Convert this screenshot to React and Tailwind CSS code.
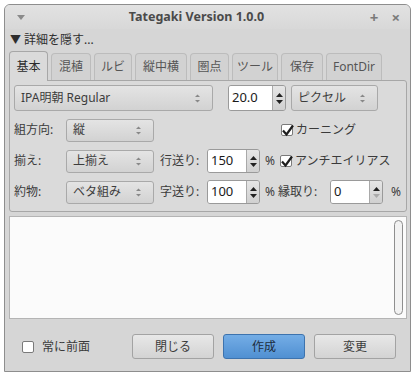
import React from 'react'

const font = { fontFamily: '"Noto Sans", "Noto Sans CJK JP", sans-serif' }

function Arrows() {
  return (
    <svg width="7" height="11" viewBox="0 0 7 11" className="shrink-0">
      <path d="M1 4 L3.5 1.5 L6 4" fill="#888" />
      <path d="M1 7 L3.5 9.5 L6 7" fill="#888" />
    </svg>
  )
}

function Combo({ label, w, h = 'h-[23px]' }) {
  return (
    <div
      className={`${w} ${h} flex items-center justify-between pl-[6px] pr-[11px] rounded-[3px] border border-[#a9a9a9] bg-gradient-to-b from-[#e4e4e4] to-[#d2d2d2] text-[#3c3c3c]`}
    >
      <span>{label}</span>
      <Arrows />
    </div>
  )
}

function Spin({ value, w, h = 'h-[24px]', dim }) {
  return (
    <div className={`${w} ${h} flex rounded-[3px] border border-[#9a9a9a] overflow-hidden`}>
      <div className="flex-1 bg-white flex items-center pl-[3px] text-[13px] text-[#1a1a1a]">{value}</div>
      <div className="w-[13px] border-l border-[#a9a9a9] bg-gradient-to-b from-[#e6e6e6] to-[#d0d0d0] flex flex-col items-center justify-center gap-[3px]">
        <svg width="7" height="4" viewBox="0 0 7 4"><path d="M0 4 L3.5 0 L7 4 Z" fill="#222" /></svg>
        <svg width="7" height="4" viewBox="0 0 7 4"><path d="M0 0 L3.5 4 L7 0 Z" fill={dim ? '#aaa' : '#222'} /></svg>
      </div>
    </div>
  )
}

function Check({ checked }) {
  return (
    <div className="w-[12px] h-[12px] border border-[#7a7a7a] bg-white rounded-[2px] relative shrink-0">
      {checked && (
        <svg width="14" height="13" viewBox="0 0 14 13" className="absolute -left-[1px] -top-[1px]">
          <path d="M2 6.5 L5.5 10.5 L12 1.5" stroke="#1e1e1e" strokeWidth="2.2" fill="none" />
        </svg>
      )}
    </div>
  )
}

function Button({ children, primary }) {
  const cls = primary
    ? 'border-[#3d73ae] bg-gradient-to-b from-[#74ade6] to-[#5090d2] text-[#1d2d3e]'
    : 'border-[#a3a3a3] bg-gradient-to-b from-[#e8e8e8] to-[#d3d3d3] text-[#3c3c3c]'
  return (
    <div className={`w-[82px] h-[25px] rounded-[3px] border flex items-center justify-center ${cls}`}>
      {children}
    </div>
  )
}

const tabs = ['混植', 'ルビ', '縦中横', '圏点', 'ツール', '保存', 'FontDir']
const tabW = ['w-[40px]', 'w-[38px]', 'w-[52px]', 'w-[39px]', 'w-[46px]', 'w-[42px]', 'w-[56px]']

export default function App() {
  return (
    <div className="w-[415px] h-[376px] bg-white pt-[4px] pl-[4px] text-[12px]" style={font}>
      <div className="w-[407px] h-[368px] border border-[#8e8e8e] rounded-t-[6px] bg-[#d6d6d6] flex flex-col overflow-hidden">
        {/* title bar */}
        <div className="h-[24px] flex items-center bg-gradient-to-b from-[#e2e2e2] to-[#d8d8d8] text-[#4a4a4a]">
          <div className="w-[30px] pl-[12px]">
            <svg width="8" height="5" viewBox="0 0 8 5"><path d="M0 0 L8 0 L4 5 Z" fill="#8a8a8a" /></svg>
          </div>
          <div className="flex-1 text-center text-[12.5px] font-bold pl-[8px]">Tategaki Version 1.0.0</div>
          <div className="w-[60px] flex items-center justify-end gap-[13px] pr-[10px] text-[#7a7a7a]">
            <span className="text-[15px] font-bold leading-none">+</span>
            <span className="text-[15px] font-bold leading-none">×</span>
          </div>
        </div>
        {/* expander */}
        <div className="h-[22px] flex items-center pl-[5px] text-[#2e2e2e]">
          <span className="text-[11px] mr-[3px]">▼</span>
          <span>詳細を隠す...</span>
        </div>
        {/* tabs */}
        <div className="flex items-end px-[4px] h-[29px] gap-[3px] text-[#555]">
          <div className="w-[39px] h-[30px] -mb-[1px] border border-b-0 border-[#a7a7a7] rounded-t-[4px] bg-[#dadada] flex items-center justify-center text-[#2a2a2a] relative z-10">
            基本
          </div>
          {tabs.map((t, i) => (
            <div
              key={t}
              className={`${tabW[i]} h-[27px] border border-b-0 border-[#bcbcbc] rounded-t-[4px] bg-[#d2d2d2] flex items-center justify-center`}
            >
              {t}
            </div>
          ))}
        </div>
        {/* tab pane */}
        <div className="ml-[4px] mr-[3px] border border-[#a7a7a7] rounded-b-[3px] rounded-tr-[3px] bg-[#dadada] px-[4px] pt-[4px] pb-[7px] flex flex-col gap-[7px] text-[#3a3a3a]">
          <div className="flex items-center">
            <Combo label="IPA明朝 Regular" w="w-[199px]" h="h-[26px]" />
            <div className="w-[15px]" />
            <Spin value="20.0" w="w-[58px]" h="h-[26px]" />
            <div className="w-[5px]" />
            <Combo label="ピクセル" w="w-[87px]" h="h-[26px]" />
          </div>
          <div className="flex items-center h-[24px]">
            <span className="w-[52px]">組方向:</span>
            <Combo label="縦" w="w-[88px]" />
            <div className="w-[127px]" />
            <Check checked />
            <span className="ml-[3px]">カーニング</span>
          </div>
          <div className="flex items-center h-[24px]">
            <span className="w-[52px]">揃え:</span>
            <Combo label="上揃え" w="w-[88px]" />
            <span className="ml-[6px] w-[47px]">行送り:</span>
            <Spin value="150" w="w-[53px]" />
            <span className="ml-[5px] w-[15px]">%</span>
            <Check checked />
            <span className="ml-[3px]">アンチエイリアス</span>
          </div>
          <div className="flex items-center h-[24px]">
            <span className="w-[52px]">約物:</span>
            <Combo label="ベタ組み" w="w-[88px]" />
            <span className="ml-[6px] w-[47px]">字送り:</span>
            <Spin value="100" w="w-[53px]" />
            <span className="ml-[5px] w-[13px]">%</span>
            <span className="w-[52px]">縁取り:</span>
            <Spin value="0" w="w-[53px]" dim />
            <span className="ml-[8px]">%</span>
          </div>
        </div>
        {/* text area */}
        <div className="mt-[4px] ml-[4px] mr-[3px] h-[103px] border border-[#b4b4b4] bg-[#fbfbfb] flex justify-end pr-[3px] py-[3px]">
          <div className="w-[9px] h-full rounded-full border border-[#8e8e8e] bg-[#f2f2f2]" />
        </div>
        {/* bottom row */}
        <div className="flex items-center mt-[15px] pl-[17px] text-[#3a3a3a]">
          <Check />
          <span className="ml-[8px] w-[90px]">常に前面</span>
          <Button>閉じる</Button>
          <div className="w-[9px]" />
          <Button primary>作成</Button>
          <div className="w-[9px]" />
          <Button>変更</Button>
        </div>
      </div>
    </div>
  )
}
